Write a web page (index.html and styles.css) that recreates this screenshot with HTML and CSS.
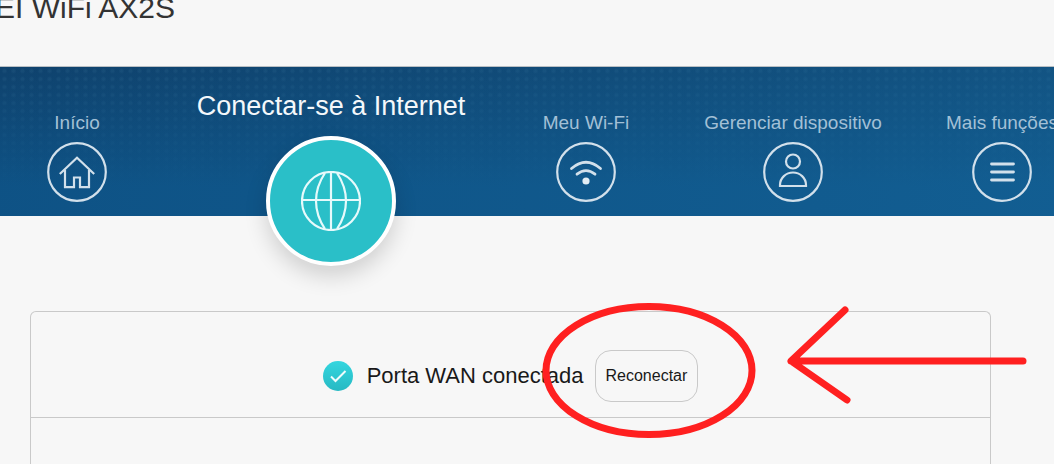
FILE: index.html
```html
<!DOCTYPE html>
<html lang="pt-BR">
<head>
<meta charset="utf-8">
<meta name="viewport" content="width=device-width, initial-scale=1">
<title>WiFi AX2S</title>
<link rel="stylesheet" href="styles.css">
</head>
<body>
<header class="header"><h1 class="title">EI WiFi AX2S</h1></header>
<nav class="nav">
  <a class="item" href="#"><span class="label">Início</span>
    <svg class="icon" viewBox="0 0 60 60"><circle cx="30" cy="30" r="28.8"/><path d="M12.800 32 30 15.800 47.200 32M18 28V45.200H27V35.500H33V45.200H42V28"/></svg>
  </a>
  <a class="item active" href="#" aria-current="page"><span class="label">Conectar-se à Internet</span>
    <span class="badge"><svg class="globe" viewBox="0 0 60 60"><circle cx="30" cy="30" r="29"/><path d="M30 1V59M1 29H59M24 2C12 20 12 40 24 58M36 2C48 20 48 40 36 58"/></svg></span>
  </a>
  <a class="item" href="#"><span class="label">Meu Wi-Fi</span>
    <svg class="icon" viewBox="0 0 60 60"><circle cx="30" cy="30" r="28.8"/><path class="thick" d="M15.500 26.500Q30 14 44.500 26.500M21 32.200Q30 25 39 32.200"/><circle class="dot" cx="30" cy="39" r="3.600"/></svg>
  </a>
  <a class="item" href="#"><span class="label">Gerenciar dispositivo</span>
    <svg class="icon" viewBox="0 0 60 60"><circle cx="30" cy="30" r="28.800"/><circle cx="30" cy="19.500" r="7"/><path d="M17 44V43C17 36 23 30.500 30 30.500S43 36 43 43V44Z"/></svg>
  </a>
  <a class="item" href="#"><span class="label">Mais funções</span>
    <svg class="icon" viewBox="0 0 60 60"><circle cx="30" cy="30" r="28.800"/><path class="thick" d="M19.500 22H41.500M19.500 30H41.500M19.500 38H41.500"/></svg>
  </a>
</nav>
<main class="panel">
  <div class="status">
    <svg class="check" viewBox="0 0 30 30"><defs><linearGradient id="teal" x1="0" y1="0" x2="0" y2="1"><stop offset="0" stop-color="#34d6df"/><stop offset="1" stop-color="#27b9c3"/></linearGradient></defs><circle cx="15" cy="15" r="15" fill="url(#teal)" stroke="none"/><path d="M8 15.500 12.500 20 22.500 10"/></svg>
    <span class="message">Porta WAN conectada</span>
    <button class="reconnect" type="button">Reconectar</button>
  </div>
</main>
<svg class="marks" viewBox="540 300 490 142" aria-hidden="true"><ellipse cx="649" cy="370.500" rx="103" ry="64"/><path d="M1023 361H791L845 310M791 361 847 400"/></svg>
</body>
</html>
```
FILE: styles.css
```css
* { box-sizing: border-box; }
body {
  margin: 0;
  min-height: 100vh;
  display: flex;
  flex-direction: column;
  position: relative;
  overflow: hidden;
  background: #f7f7f7;
  color: #191919;
  font-family: "Liberation Sans", Arial, sans-serif;
}
.header { padding-bottom: 42px; border-bottom: 1px solid #b9bfc4; }
.title {
  margin: -8px 0 0 -5px;
  font-size: 30px;
  line-height: 32px;
  font-weight: 400;
  color: #333;
}
.nav {
  display: grid;
  grid-template-columns: 154fr 354fr 156fr 258fr 160fr;
  width: calc(100% + 28px);
  height: 149px;
  background:
    linear-gradient(100deg, rgba(10, 70, 120, 0), rgba(24, 112, 166, 0.4)),
    linear-gradient(to bottom, rgba(14, 82, 133, 0), #0e5285 80%),
    radial-gradient(circle, #174b75 1px, transparent 3px) 0 0 / 9px 8px,
    #0f426d;
}
.item {
  display: flex;
  flex-direction: column;
  align-items: center;
  gap: 8px;
  padding-top: 45px;
  color: #a3c0d6;
  text-decoration: none;
  white-space: nowrap;
}
.label { font-size: 19px; line-height: 22px; }
.icon { width: 60px; height: 60px; }
.icon, .globe { flex: none; fill: none; stroke: #d2e0eb; stroke-width: 2.2; }
.icon .thick { stroke-width: 2.8; stroke-linecap: round; }
.icon .dot { fill: #e2edf4; stroke: none; }
.active { padding-top: 24px; gap: 14px; color: #f4f8fb; }
.active .label { font-size: 27px; line-height: 31px; }
.badge {
  display: grid;
  place-items: center;
  flex: none;
  width: 130px;
  height: 130px;
  border: 4px solid #fff;
  border-radius: 50%;
  background: #2abfc8;
  box-shadow: 0 10px 22px rgba(0, 0, 0, 0.16);
}
.globe { width: 60px; height: 60px; stroke: #e6fafb; }
.panel {
  flex: 1;
  margin: 95px 63px 0 30px;
  border: 1px solid #c9c9c9;
  border-bottom: 0;
  border-radius: 6px 6px 0 0;
}
.status {
  display: flex;
  align-items: center;
  justify-content: center;
  padding: 38px 0 15px;
  border-bottom: 1px solid #c9c9c9;
}
.check { flex: none; width: 30px; height: 30px; margin-right: 14px; fill: none; stroke: #f0fcfc; stroke-width: 2; }
.message { font-size: 22px; line-height: 26px; margin-right: 11px; }
.reconnect {
  height: 52px;
  padding: 0 10px;
  border: 1px solid #c9c9c9;
  border-radius: 16px;
  background: transparent;
  color: #191919;
  font-family: inherit;
  font-size: 16px;
}
.marks {
  position: absolute;
  left: 540px;
  top: 300px;
  width: 490px;
  height: 142px;
  fill: none;
  stroke: #ff2020;
  stroke-width: 7;
  stroke-linecap: round;
  stroke-linejoin: round;
  pointer-events: none;
}
```
